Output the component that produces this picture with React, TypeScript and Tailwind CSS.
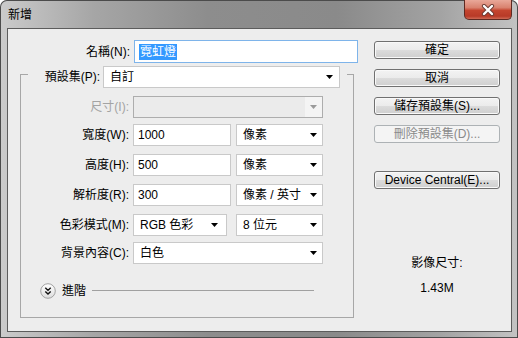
import type { ReactNode } from 'react'

const font = "font-['Liberation_Sans','Noto_Sans_CJK_TC',sans-serif]"

function Arrow({ color = '#000' }: { color?: string }) {
  return (
    <svg width="7" height="4" viewBox="0 0 7 4">
      <path d="M0 0h7L3.5 4z" fill={color} />
    </svg>
  )
}

function Combo({ text, className }: { text: string; className: string }) {
  return (
    <div
      className={`flex h-[22px] items-center justify-between border border-[#c9c9c9] bg-white pl-[6px] pr-[5px] ${className}`}
    >
      <span className="whitespace-nowrap">{text}</span>
      <Arrow />
    </div>
  )
}

function Field({ text }: { text: string }) {
  return (
    <div className="flex h-[22px] w-[98px] items-center border border-[#c9c9c9] bg-white pl-[4px]">
      {text}
    </div>
  )
}

function Row({ label, children, className = '' }: { label: string; children: ReactNode; className?: string }) {
  return (
    <div className={`flex h-[22px] items-center ${className}`}>
      <span className="w-[108px] whitespace-nowrap text-right">{label}</span>
      <div className="ml-[4px] flex gap-[5px]">{children}</div>
    </div>
  )
}

function Btn({ children, className = '' }: { children: ReactNode; className?: string }) {
  return (
    <div
      className={`flex h-[18px] items-center justify-center rounded-[3px] border border-[#707070] bg-[linear-gradient(180deg,#f3f3f3_0%,#ebebeb_50%,#dcdcdc_50%,#cfcfcf_100%)] shadow-[inset_0_0_0_1px_#f9f9f9] ${className}`}
    >
      {children}
    </div>
  )
}

function CloseButton() {
  return (
    <div className="flex h-[20px] w-[48px] items-center justify-center rounded-b-[5px] border border-t-0 border-[#5e2a22] bg-[linear-gradient(180deg,#e9a899_0%,#d9826f_40%,#c4452f_55%,#b83a27_85%,#cf6a55_100%)]">
      <svg width="14" height="12" viewBox="0 0 14 12">
        <path d="M3 2l8 8M11 2l-8 8" stroke="#6b3b33" strokeWidth="4.2" strokeLinecap="round" />
        <path d="M3 2l8 8M11 2l-8 8" stroke="#ffffff" strokeWidth="2.4" strokeLinecap="round" />
      </svg>
    </div>
  )
}

function AdvIcon() {
  return (
    <svg width="16" height="16" viewBox="0 0 16 16">
      <defs>
        <linearGradient id="adv" x1="0" y1="0" x2="0" y2="1">
          <stop offset="0" stopColor="#ffffff" />
          <stop offset="1" stopColor="#dcdcdc" />
        </linearGradient>
      </defs>
      <circle cx="8" cy="8" r="7.3" fill="url(#adv)" stroke="#a2a2a2" />
      <path d="M5.3 4.8l2.7 2.6 2.7-2.6M5.3 8.4l2.7 2.6 2.7-2.6" fill="none" stroke="#111" strokeWidth="1.4" />
    </svg>
  )
}

export default function App() {
  return (
    <div className={`h-[338px] w-[518px] bg-white text-[12px] leading-[16px] text-black ${font}`}>
      <div className="flex h-full w-full flex-col rounded-t-[7px] bg-[linear-gradient(90deg,#cbcbcb_0%,#a6a6a6_18%,#8d8d8d_40%,#8a8a8a_65%,#a3a3a3_85%,#c3c3c3_100%)] shadow-[inset_0_0_0_1px_#4b4b4b]">
        <div className="flex h-[28px] shrink-0 items-start justify-between pl-[8px] pr-[6px]">
          <span className="mt-[7px]">新增</span>
          <CloseButton />
        </div>

        <div className="ml-[7px] mr-[6px] flex h-[304px] border border-[#5c5c5c] bg-[#ededed] pl-[12px]">
          {/* left column */}
          <div className="flex w-[338px] flex-col pt-[11px]">
            <div className="flex h-[23px] items-center">
              <span className="w-[110px] text-right">名稱(N):</span>
              <div className="ml-[4px] flex h-[23px] flex-1 items-center border border-[#7eb4ea] bg-white pl-[4px]">
                <span className="bg-[#3399ff] px-px text-white">霓虹燈</span>
              </div>
            </div>

            <div className="mt-[3px] w-[334px]">
              <div className="flex h-[22px]">
                <div className="mt-[8px] w-[8px] border-l border-t border-[#a7a7a7]" />
                <span className="flex w-[72px] items-center justify-end whitespace-nowrap">預設集(P):</span>
                <Combo text="自訂" className="ml-[3px] w-[237px] pr-[6px]" />
                <div className="w-[7px]" />
                <div className="mt-[8px] w-[7px] border-r border-t border-[#a7a7a7]" />
              </div>

              <div className="flex flex-col border-x border-b border-[#a7a7a7] pb-[19px] pt-[8px]">
                <Row label="尺寸(I):" className="text-[#a3a3a3]">
                  <div className="flex h-[22px] w-[190px] border border-[#adadad]">
                    <div className="flex-1 bg-[#ebebeb]" />
                    <div className="flex w-[17px] items-center justify-center bg-[#f4f4f4]">
                      <Arrow color="#9a9a9a" />
                    </div>
                  </div>
                </Row>
                <Row label="寬度(W):" className="mt-[6px]">
                  <Field text="1000" />
                  <Combo text="像素" className="w-[87px]" />
                </Row>
                <Row label="高度(H):" className="mt-[8px]">
                  <Field text="500" />
                  <Combo text="像素" className="w-[87px]" />
                </Row>
                <Row label="解析度(R):" className="mt-[8px]">
                  <Field text="300" />
                  <Combo text="像素 / 英寸" className="w-[87px]" />
                </Row>
                <Row label="色彩模式(M):" className="mt-[8px]">
                  <Combo text="RGB 色彩" className="mr-[4px] w-[94px] pr-[8px]" />
                  <Combo text="8 位元" className="w-[87px]" />
                </Row>
                <Row label="背景內容(C):" className="mt-[6px]">
                  <Combo text="白色" className="w-[190px]" />
                </Row>

                <div className="ml-[19px] mr-[39px] mt-[19px] flex h-[15px] items-center">
                  <AdvIcon />
                  <span className="ml-[6px]">進階</span>
                  <div className="ml-[6px] h-px flex-1 bg-[#a0a0a0]" />
                </div>
              </div>
            </div>
          </div>

          {/* right column */}
          <div className="ml-[16px] flex w-[126px] flex-col pt-[12px]">
            <Btn className="border-[#3c7fb1] shadow-[inset_0_0_0_1px_#cfeefc]">確定</Btn>
            <Btn className="mt-[10px]">取消</Btn>
            <Btn className="mt-[10px]">儲存預設集(S)...</Btn>
            <div className="mt-[10px] flex h-[18px] items-center justify-center rounded-[3px] border border-[#adb2b5] bg-[#f4f4f4] text-[#8a8a8a]">
              刪除預設集(D)...
            </div>
            <Btn className="mt-[28px]">Device Central(E)...</Btn>

            <div className="mt-[66px] text-center">影像尺寸:</div>
            <div className="mt-[9px] text-center">1.43M</div>
          </div>
        </div>
      </div>
    </div>
  )
}
